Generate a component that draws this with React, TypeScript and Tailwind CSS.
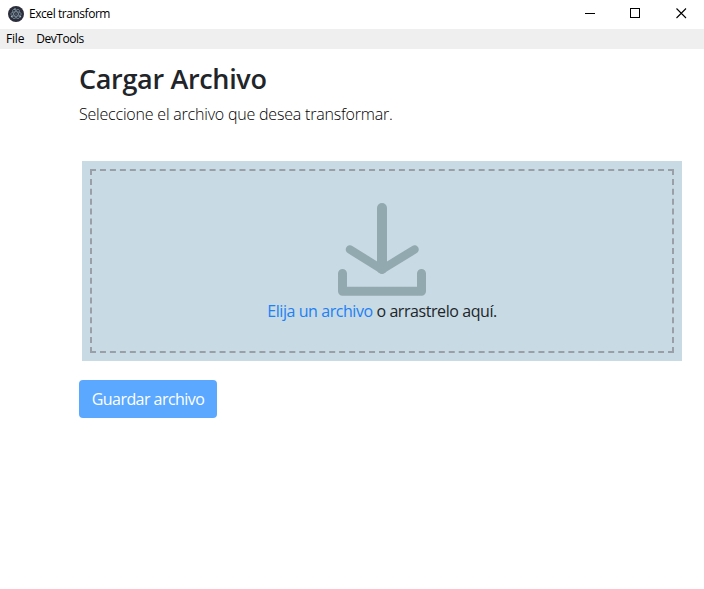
function AppLogo() {
  return (
    <svg className="size-4 shrink-0" viewBox="0 0 16 16" fill="none">
      <circle cx="8" cy="8" r="8" fill="#2b2e3a" />
      <g stroke="#8fa6b6" strokeWidth="0.6">
        <ellipse cx="8" cy="8" rx="5.2" ry="2.2" />
        <ellipse cx="8" cy="8" rx="5.2" ry="2.2" transform="rotate(60 8 8)" />
        <ellipse cx="8" cy="8" rx="5.2" ry="2.2" transform="rotate(120 8 8)" />
      </g>
      <g fill="#9fb6c4">
        <circle cx="8" cy="8" r="0.6" />
        <circle cx="3.6" cy="10.6" r="0.8" />
        <circle cx="12.4" cy="10.6" r="0.8" />
        <circle cx="7" cy="3" r="0.8" />
      </g>
    </svg>
  );
}

function TitleBar() {
  return (
    <header className="flex h-[29px] items-start justify-between bg-white">
      <div className="flex h-[27px] items-center gap-[5px] pl-2 text-black">
        <AppLogo />
        <span className="text-[12px] leading-4 tracking-[-0.45px] whitespace-nowrap">Excel transform</span>
      </div>
      <div className="flex h-[27px]">
        <div className="flex w-[45px] items-center justify-center">
          <svg width="11" height="11" viewBox="0 0 11 11" shapeRendering="crispEdges">
            <path d="M0 5.5h10" stroke="#000" />
          </svg>
        </div>
        <div className="flex w-[45px] items-center justify-center">
          <svg width="11" height="11" viewBox="0 0 11 11" fill="none" shapeRendering="crispEdges">
            <path d="M.5 .5h9v9h-9z" stroke="#000" />
          </svg>
        </div>
        <div className="flex w-[46px] items-center justify-center">
          <svg width="11" height="11" viewBox="0 0 11 11">
            <path d="M.5 .5l9.500 9.500M10 .5l-9.500 9.500" stroke="#000" strokeWidth="1.1" />
          </svg>
        </div>
      </div>
    </header>
  );
}

function DownloadIcon() {
  return (
    <svg width="88" height="94" viewBox="0 0 88 94" fill="none" stroke="#92a9b0" strokeLinecap="round" strokeLinejoin="round">
      <path d="M44 5v61" strokeWidth="10" />
      <path d="M12 46.500L44 66.500L76.500 46.500" strokeWidth="8.500" />
      <path d="M4.500 70.500V88.300H83.500V70.500" strokeWidth="9" />
    </svg>
  );
}

export default function App() {
  return (
    <div className="h-[589px] w-full overflow-hidden bg-white font-['Open_Sans','Noto_Sans',sans-serif] text-[#212529]">
      <TitleBar />
      <nav className="flex h-5 items-center gap-3 bg-[#efefef] pl-1.5 text-[12px] leading-4 text-black">
        <span className="tracking-[-0.2px]">File</span>
        <span className="tracking-[-0.45px]">DevTools</span>
      </nav>
      <main className="flex flex-col items-start pt-[13px] pl-[79px]">
        <h1 className="text-[27px] leading-[34px] font-semibold tracking-[-0.33px] whitespace-nowrap">Cargar Archivo</h1>
        <p className="mt-[6px] text-[16px] leading-6 font-light tracking-[-0.2px] whitespace-nowrap text-black">
          Seleccione el archivo que desea transformar.
        </p>
        <section className="mt-[35px] ml-[3px] flex h-[200px] w-[600px] flex-col items-center bg-[#c8dae3] pt-[42px] outline-2 -outline-offset-10 outline-[#9a9fa7] outline-dashed">
          <DownloadIcon />
          <p className="mt-[2px] text-[16px] leading-6 tracking-[-0.43px] whitespace-nowrap text-[#212529]">
            <span className="text-[#2180f5]">Elija un archivo</span> o arrastrelo aquí.
          </p>
        </section>
        <button className="mt-[19px] h-[38px] w-[138px] rounded bg-[#5aa8ff] text-[16px] leading-6 tracking-[-0.55px] whitespace-nowrap text-white">
          Guardar archivo
        </button>
      </main>
    </div>
  );
}
